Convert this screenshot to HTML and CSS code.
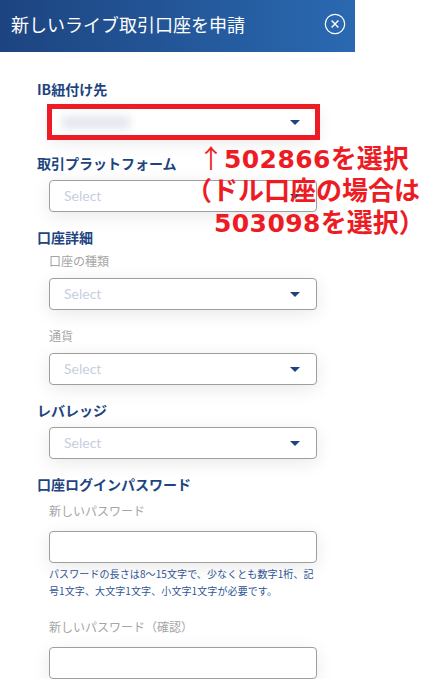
FILE: index.html
```html
<!DOCTYPE html>
<html lang="ja">
<head>
    <meta charset="UTF-8">
    <meta name="viewport" content="width=device-width, initial-scale=1.0">
    <title>新しいライブ取引口座を申請</title>
    <link rel="stylesheet" href="styles.css">
</head>
<body>
    <div class="panel">
        <div class="header">
            <h1 class="title">新しいライブ取引口座を申請</h1>
            <svg class="close" width="22" height="22" viewBox="0 0 22 22" fill="none" stroke="#fff">
                <circle cx="11" cy="11" r="9.7" stroke-width="1.2"/>
                <path d="M7.6 7.6l6.8 6.8M14.4 7.6l-6.8 6.8" stroke-width="1.4"/>
            </svg>
        </div>
        <form class="form">
            <div class="heading first">IB紐付け先</div>
            <div class="field select highlighted">
                <span class="blurred"></span>
                <span class="arrow"></span>
            </div>

            <div class="heading">取引プラットフォーム</div>
            <div class="field select">
                <span class="placeholder">Select</span>
                <span class="arrow"></span>
            </div>

            <div class="heading">口座詳細</div>
            <div class="sublabel details">口座の種類</div>
            <div class="field select">
                <span class="placeholder">Select</span>
                <span class="arrow"></span>
            </div>
            <div class="sublabel currency">通貨</div>
            <div class="field select">
                <span class="placeholder">Select</span>
                <span class="arrow"></span>
            </div>

            <div class="heading">レバレッジ</div>
            <div class="field select">
                <span class="placeholder">Select</span>
                <span class="arrow"></span>
            </div>

            <div class="heading">口座ログインパスワード</div>
            <div class="sublabel password">新しいパスワード</div>
            <div class="field"></div>
            <p class="hint">パスワードの長さは8〜15文字で、少なくとも数字1桁、記号1文字、大文字1文字、小文字1文字が必要です。</p>
            <div class="sublabel confirm">新しいパスワード（確認）</div>
            <div class="field"></div>
        </form>
    </div>

    <div class="note">
        <div class="note-one"><span class="up">↑</span><span class="digits">502866</span>を選択</div>
        <div class="note-two">（ドル口座の場合は</div>
        <div class="note-three"><span class="digits">503098</span>を選択）</div>
    </div>
</body>
</html>
```

FILE: styles.css
```css
* {
    box-sizing: border-box;
}
body {
    margin: 0;
    background: #fff;
    font-family: "Noto Sans CJK JP", "Noto Sans", sans-serif;
    overflow: hidden;
}
.panel {
    width: 355px;
}
.header {
    height: 52px;
    padding: 0 9px 5px 11px;
    display: flex;
    align-items: center;
    justify-content: space-between;
    background: linear-gradient(90deg, #1d4480 0%, #2a69b1 100%);
}
.title {
    margin: 0;
    font-size: 18px;
    font-weight: 400;
    color: #fff;
    white-space: nowrap;
}
.form {
    padding: 0 38px 0 37px;
}
.heading {
    width: fit-content;
    height: 20px;
    margin: 16px 0 6px;
    font-size: 14px;
    font-weight: 700;
    line-height: 18px;
    color: #1d4480;
    white-space: nowrap;
}
.heading.first {
    margin-top: 28px;
}
.sublabel {
    width: fit-content;
    height: 20px;
    margin-left: 12px;
    font-size: 12px;
    line-height: 20px;
    color: #a5a5a5;
    white-space: nowrap;
}
.sublabel.details {
    margin-top: -3px;
    margin-bottom: 7px;
}
.sublabel.currency {
    margin-top: 16px;
    margin-bottom: 7px;
}
.sublabel.password {
    margin-top: 0;
    margin-bottom: 10px;
}
.sublabel.confirm {
    margin-top: 18px;
    margin-bottom: 10px;
}
.field {
    position: relative;
    width: 268px;
    height: 32px;
    margin-left: 12px;
    border: 1px solid #9e9e9e;
    border-radius: 4px;
    background: #fff;
    box-shadow: 0 4px 18px rgba(0, 0, 0, 0.09);
}
.select {
    display: flex;
    align-items: center;
    justify-content: space-between;
    padding: 0 16px 0 14px;
}
.placeholder {
    font-family: "Lato", "Noto Sans", sans-serif;
    font-size: 14px;
    color: #c6cfdf;
    position: relative;
    top: -1px;
}
.arrow {
    width: 0;
    height: 0;
    border-left: 5px solid transparent;
    border-right: 5px solid transparent;
    border-top: 5px solid #1d4480;
}
.highlighted {
    border-color: transparent;
}
.highlighted::after {
    content: "";
    box-sizing: border-box;
    position: absolute;
    top: -3px;
    left: -3px;
    width: 273px;
    height: 36px;
    border: 5px solid #ed1c24;
}
.blurred {
    width: 68px;
    height: 13px;
    margin-left: -2px;
    background: #e4e7ee;
    filter: blur(4px);
}
.hint {
    width: 268px;
    margin: 3px 0 0 12px;
    font-size: 10px;
    letter-spacing: 0.1px;
    line-height: 16.5px;
    color: #2f5596;
}
.note {
    position: absolute;
    top: 141px;
    left: 186px;
    font-size: 26px;
    font-weight: 700;
    line-height: 32px;
    color: #ed1c24;
    white-space: nowrap;
}
.up {
    font-weight: 400;
}
.digits {
    font-family: "DejaVu Sans", sans-serif;
    font-size: 25px;
    letter-spacing: 0.4px;
    line-height: 0;
}
.note-one {
    padding-left: 12px;
}
.note-three {
    padding-left: 28px;
}
```
